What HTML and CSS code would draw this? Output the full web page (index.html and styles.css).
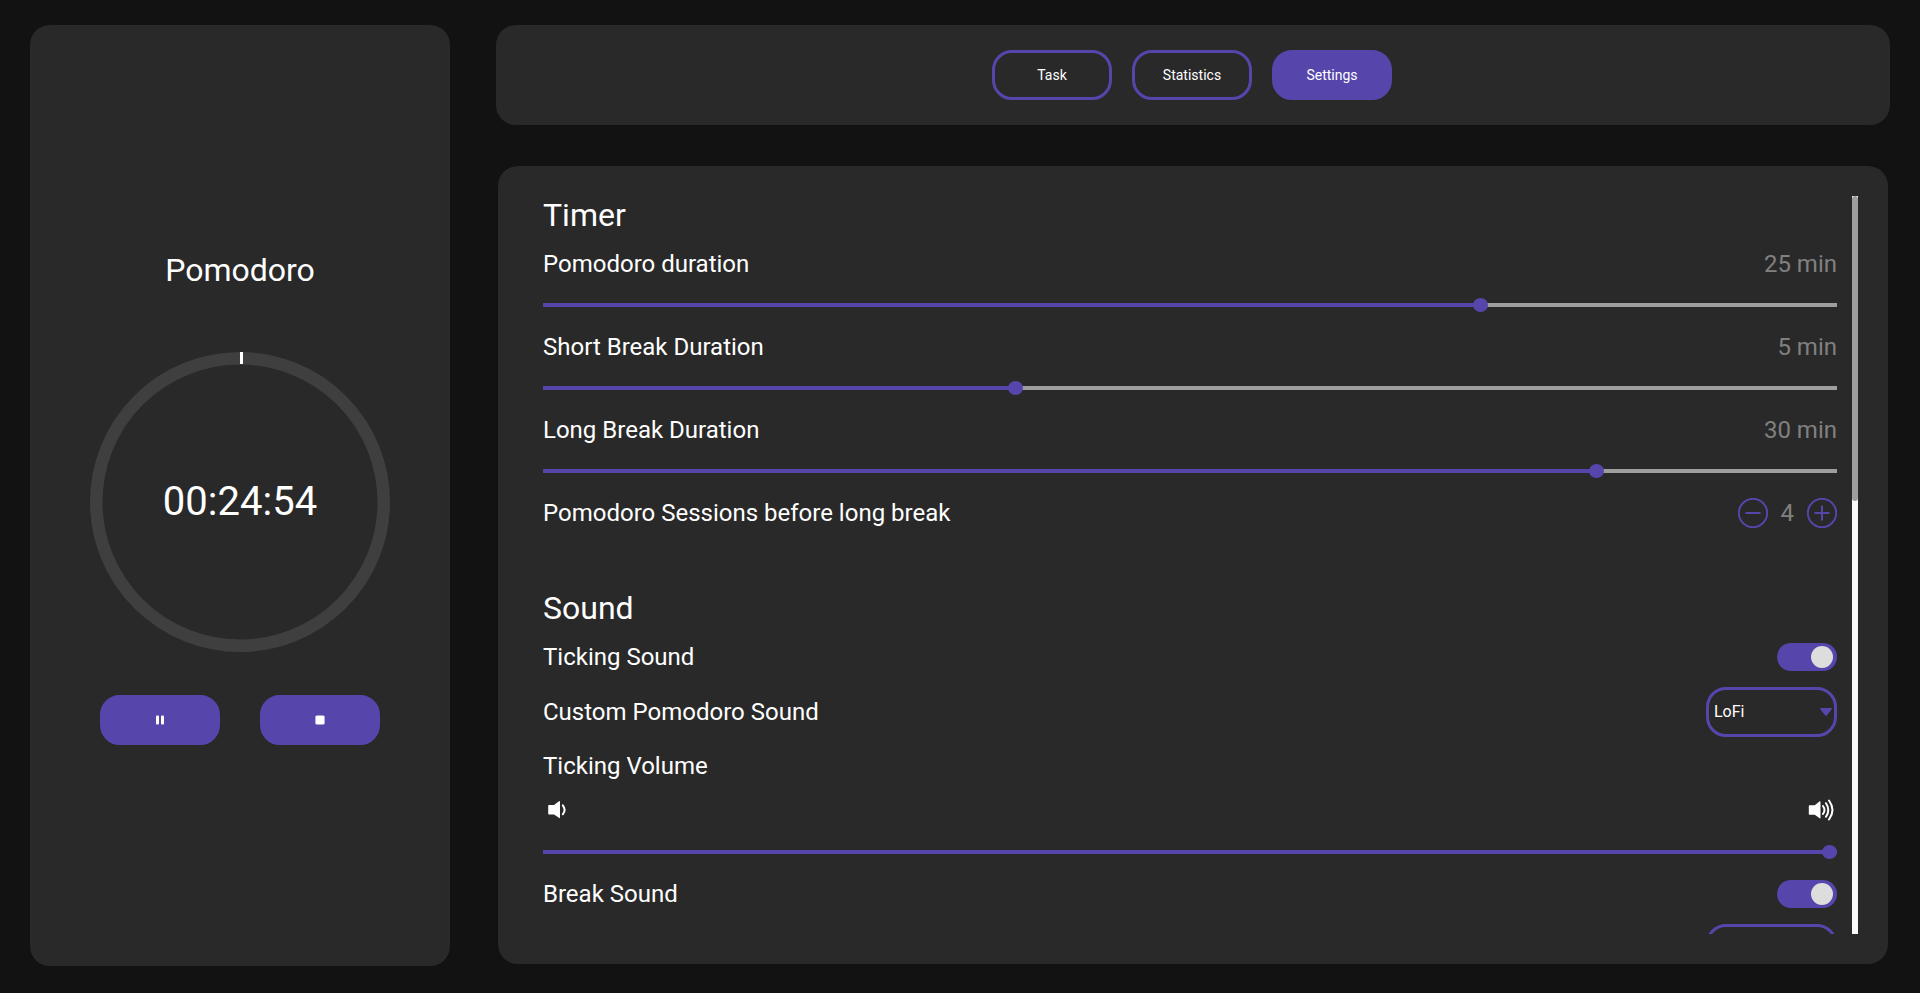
FILE: index.html
```html
<!DOCTYPE html>
<html lang="en">
<head>
<meta charset="utf-8">
<meta name="viewport" content="width=device-width, initial-scale=1">
<title>Pomodoro</title>
<link rel="stylesheet" href="styles.css">
</head>
<body>
<div class="app">
  <aside class="timer">
    <h1 class="heading">Pomodoro</h1>
    <div class="dial">
      <svg class="dial-ring" viewBox="0 0 300 300" aria-hidden="true">
        <circle cx="150" cy="150" r="143.75" fill="none" stroke="#3f3f3f" stroke-width="12.5"/>
        <rect x="150" y="0" width="3" height="12" fill="#fff"/>
      </svg>
      <time class="dial-time">00:24:54</time>
    </div>
    <div class="timer-actions">
      <button class="button button-solid" type="button" aria-label="Pause">
        <svg width="10" height="10" viewBox="0 0 10 10" fill="#fff" aria-hidden="true"><rect x="1" y="0.5" width="3" height="9" rx="1"/><rect x="6" y="0.5" width="3" height="9" rx="1"/></svg>
      </button>
      <button class="button button-solid" type="button" aria-label="Stop">
        <svg width="10" height="10" viewBox="0 0 10 10" fill="#fff" aria-hidden="true"><rect x="0.400" y="0.400" width="9.200" height="9.200" rx="1.5"/></svg>
      </button>
    </div>
  </aside>

  <main class="main">
    <nav class="tabs">
      <button class="button" type="button">Task</button>
      <button class="button" type="button">Statistics</button>
      <button class="button button-solid" type="button" aria-current="page">Settings</button>
    </nav>

    <div class="panel">
      <div class="scroll">
        <section class="section">
          <h2 class="heading">Timer</h2>
          <div class="field">
            <div class="row"><label for="pomodoro">Pomodoro duration</label><output class="value" for="pomodoro">25 min</output></div>
            <input class="slider" style="--fill:72.7%" id="pomodoro" type="range" min="1" max="34" value="25">
          </div>
          <div class="field">
            <div class="row"><label for="short">Short Break Duration</label><output class="value" for="short">5 min</output></div>
            <input class="slider" style="--fill:36.4%" id="short" type="range" min="1" max="12" value="5">
          </div>
          <div class="field">
            <div class="row"><label for="long">Long Break Duration</label><output class="value" for="long">30 min</output></div>
            <input class="slider" style="--fill:81.8%" id="long" type="range" min="3" max="36" value="30">
          </div>
          <div class="row">
            <span>Pomodoro Sessions before long break</span>
            <div class="stepper">
              <button class="step" type="button" aria-label="Fewer sessions"><svg width="30" height="30" viewBox="0 0 30 30" aria-hidden="true"><circle cx="15" cy="15" r="14.2"/><path d="M7.5 15h15"/></svg></button>
              <output class="value">4</output>
              <button class="step" type="button" aria-label="More sessions"><svg width="30" height="30" viewBox="0 0 30 30" aria-hidden="true"><circle cx="15" cy="15" r="14.2"/><path d="M7.5 15h15M15 7.5v15"/></svg></button>
            </div>
          </div>
        </section>

        <section class="section">
          <h2 class="heading">Sound</h2>
          <div class="row"><label for="ticking">Ticking Sound</label><input class="toggle" id="ticking" type="checkbox" checked></div>
          <div class="row row-select"><label for="pomodoro-sound">Custom Pomodoro Sound</label>
            <div class="select-box"><select class="select" id="pomodoro-sound"><option>LoFi</option></select><svg class="caret" width="12" height="8" viewBox="0 0 12 8" aria-hidden="true"><path d="M.8 0h10.400c.8 0 1 .8.5 1.300L7 7.200a1.300 1.300 0 0 1-2 0L.3 1.300C-.2.8 0 0 .8 0z"/></svg></div>
          </div>
          <div class="row"><label for="volume">Ticking Volume</label></div>
          <div class="field">
            <div class="volume-icons">
              <svg width="30" height="30" viewBox="0 0 30 30" aria-hidden="true"><path fill="#fff" d="M6 10h5l5.300-4Q17 6 17 7v15.500q0 1-.7.5L11 19.500H6q-.8 0-.8-.8v-8q0-.7.8-.7z"/><path class="wave" d="M19.800 10.300q3.600 4.500 0 9"/></svg>
              <svg width="30" height="30" viewBox="0 0 30 30" aria-hidden="true"><path fill="#fff" d="M2.600 10.300h5.100l5-4q.8-.2.8.8v15.700q0 1-.8.5l-5-3.600H2.600q-.8 0-.8-.8v-8q0-.6.8-.6z"/><path class="wave" d="M16 11q3 4 0 8M19 8.200q4.600 6.800 0 13.600M22 5.500q7 9.500 0 19"/></svg>
            </div>
            <input class="slider" style="--fill:100%" id="volume" type="range" min="0" max="100" value="100">
          </div>
          <div class="row"><label for="break">Break Sound</label><input class="toggle" id="break" type="checkbox" checked></div>
          <div class="row row-select"><label for="break-sound">Custom Break Sound</label>
            <div class="select-box"><select class="select" id="break-sound"><option>LoFi</option></select><svg class="caret" width="12" height="8" viewBox="0 0 12 8" aria-hidden="true"><path d="M0 0h12L6 8z"/></svg></div>
          </div>
        </section>
      </div>
      <div class="scrollbar" aria-hidden="true"><div class="scrollbar-thumb"></div></div>
    </div>
  </main>
</div>
</body>
</html>
```

FILE: styles.css
```css
:root {
  --page: #121212;
  --panel: #292929;
  --accent: #5646ac;
  --muted: #808080;
  --track: #9e9e9e;
}

* {
  box-sizing: border-box;
}

body {
  margin: 0;
  background: var(--page);
  color: #fff;
  font: 24px/28px Roboto, "Liberation Sans", sans-serif;
}

button,
select,
input {
  margin: 0;
  font-family: inherit;
  color: inherit;
}

.app {
  display: flex;
  gap: 46px;
  height: 100vh;
  padding: 25px 30px 27px;
}

.heading {
  margin: 0;
  font-size: 32px;
  line-height: 39px;
  font-weight: 400;
}

.timer {
  flex: 0 0 420px;
  display: flex;
  flex-direction: column;
  align-items: center;
  justify-content: center;
  padding-top: 4px;
  border-radius: 20px;
  background: var(--panel);
}

.dial {
  display: grid;
  place-items: center;
  margin: 62px 0 43px;
}

.dial-ring {
  grid-area: 1 / 1;
  width: 300px;
  height: 300px;
}

.dial-time {
  grid-area: 1 / 1;
  font-size: 40px;
  line-height: 50px;
}

.timer-actions {
  display: flex;
  gap: 40px;
}

.button {
  display: flex;
  align-items: center;
  justify-content: center;
  width: 120px;
  height: 50px;
  padding: 0;
  border: 3px solid var(--accent);
  border-radius: 20px;
  background: none;
  font-size: 14px;
}

.button-solid {
  background: var(--accent);
}

.main {
  flex: 1;
  min-width: 0;
  display: flex;
  flex-direction: column;
  gap: 41px;
}

.tabs {
  display: flex;
  flex-wrap: wrap;
  justify-content: center;
  gap: 20px;
  padding: 25px 27px 25px 25px;
  border-radius: 20px;
  background: var(--panel);
}

.panel {
  flex: 1;
  min-height: 0;
  display: flex;
  gap: 15px;
  margin: 0 2px 2px;
  padding: 30px 30px 30px 45px;
  border-radius: 20px;
  background: var(--panel);
}

.scroll {
  flex: 1;
  min-width: 0;
  overflow-y: auto;
  scrollbar-width: none;
}

.scrollbar {
  width: 6px;
  background: #fafafa;
}

.scrollbar-thumb {
  height: 41.3%;
  border-radius: 3px;
  background: var(--track);
}

.section {
  display: flex;
  flex-direction: column;
  gap: 15px;
}

.section + .section {
  margin-top: 62px;
}

.row {
  display: flex;
  align-items: center;
  justify-content: space-between;
  height: 28px;
}

.row-select {
  height: 51px;
}

.value {
  color: var(--muted);
}

.field {
  display: flex;
  flex-direction: column;
  gap: 20px;
  padding-bottom: 6px;
}

.slider {
  appearance: none;
  width: 100%;
  height: 14px;
  background: linear-gradient(to right, var(--accent) var(--fill), var(--track) var(--fill)) center / 100% 4px no-repeat;
}

.slider::-webkit-slider-thumb {
  appearance: none;
  width: 15px;
  height: 14px;
  border-radius: 50%;
  background: var(--accent);
}

.stepper {
  display: flex;
  align-items: center;
  gap: 13px;
}

.step {
  display: block;
  width: 30px;
  height: 30px;
  padding: 0;
  border: 0;
  background: none;
}

.step svg {
  display: block;
  fill: none;
  stroke: var(--accent);
  stroke-width: 2;
}

.toggle {
  appearance: none;
  display: flex;
  align-items: center;
  justify-content: flex-end;
  width: 60px;
  height: 28px;
  padding: 0 4px;
  border-radius: 14px;
  background: var(--track);
}

.toggle:checked {
  background: var(--accent);
}

.toggle::before {
  content: "";
  width: 22px;
  height: 22px;
  border-radius: 50%;
  background: #ddd;
}

.select-box {
  display: grid;
  align-items: center;
}

.select {
  grid-area: 1 / 1;
  appearance: none;
  width: 131px;
  height: 50px;
  padding: 0 20px 0 5px;
  border: 3px solid var(--accent);
  border-radius: 20px;
  background: none;
  font-size: 16px;
}

.caret {
  grid-area: 1 / 1;
  justify-self: end;
  margin-right: 5px;
  fill: var(--accent);
  pointer-events: none;
}

.volume-icons {
  display: flex;
  justify-content: space-between;
}

.wave {
  fill: none;
  stroke: #fff;
  stroke-width: 2;
  stroke-linecap: round;
}
```
